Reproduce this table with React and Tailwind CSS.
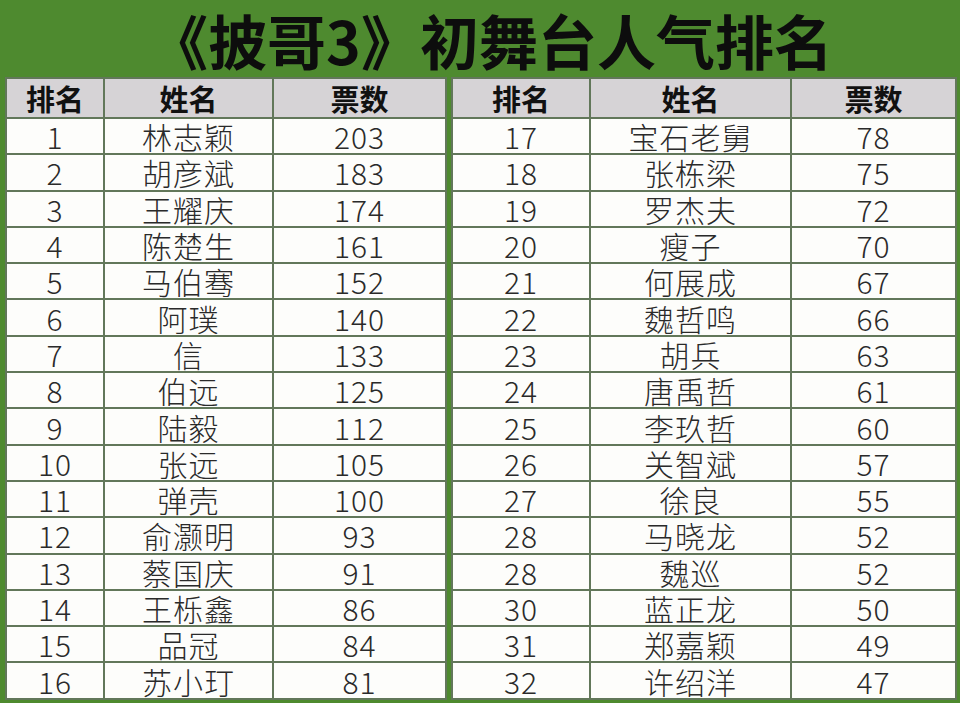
import React from "react";

const left = [
  [1, "林志颖", 203], [2, "胡彦斌", 183], [3, "王耀庆", 174], [4, "陈楚生", 161],
  [5, "马伯骞", 152], [6, "阿璞", 140], [7, "信", 133], [8, "伯远", 125],
  [9, "陆毅", 112], [10, "张远", 105], [11, "弹壳", 100], [12, "俞灏明", 93],
  [13, "蔡国庆", 91], [14, "王栎鑫", 86], [15, "品冠", 84], [16, "苏小玎", 81],
];
const right = [
  [17, "宝石老舅", 78], [18, "张栋梁", 75], [19, "罗杰夫", 72], [20, "瘦子", 70],
  [21, "何展成", 67], [22, "魏哲鸣", 66], [23, "胡兵", 63], [24, "唐禹哲", 61],
  [25, "李玖哲", 60], [26, "关智斌", 57], [27, "徐良", 55], [28, "马晓龙", 52],
  [28, "魏巡", 52], [30, "蓝正龙", 50], [31, "郑嘉颖", 49], [32, "许绍洋", 47],
];

function Table({ rows, widths, className }) {
  return (
    <table className={"border-collapse table-fixed h-[621px] " + className}>
      <colgroup>
        {widths.map((w, i) => (
          <col key={i} style={{ width: w }} />
        ))}
      </colgroup>
      <thead>
        <tr className="h-[40px] bg-[#d6d3d6]">
          {["排名", "姓名", "票数"].map((h) => (
            <th
              key={h}
              className="border-2 border-[#62775a] text-[29px] font-bold text-[#111] leading-[36px] text-center align-middle p-0"
            >
              {h}
            </th>
          ))}
        </tr>
      </thead>
      <tbody>
        {rows.map((r, i) => (
          <tr key={i} className="h-[36.3px] bg-[#fdfdfb]">
            {r.map((c, j) => (
              <td
                key={j}
                className="border-2 border-[#62775a] text-[30px] font-light text-[#2a2a2a] leading-[32px] text-center align-middle p-0 tracking-[1px]"
              >
                {c}
              </td>
            ))}
          </tr>
        ))}
      </tbody>
    </table>
  );
}

export default function App() {
  return (
    <div
      className="w-[960px] h-[703px] bg-[#4e8a2f] flex flex-col overflow-hidden"
      style={{ fontFamily: '"Noto Sans CJK SC", "Noto Sans", sans-serif' }}
    >
      <div className="h-[77px] flex items-center justify-center pl-[22px] pt-[2px]">
        <h1 className="text-[59px] font-bold leading-[70px] text-[#0d0d0d]">
          《披哥3》初舞台人气排名
        </h1>
      </div>
      <div className="flex pl-[5px] gap-[4px]">
        <Table rows={left} widths={[98, 169, 173]} className="w-[440px]" />
        <Table rows={right} widths={[138, 201, 165]} className="w-[505px]" />
      </div>
    </div>
  );
}
